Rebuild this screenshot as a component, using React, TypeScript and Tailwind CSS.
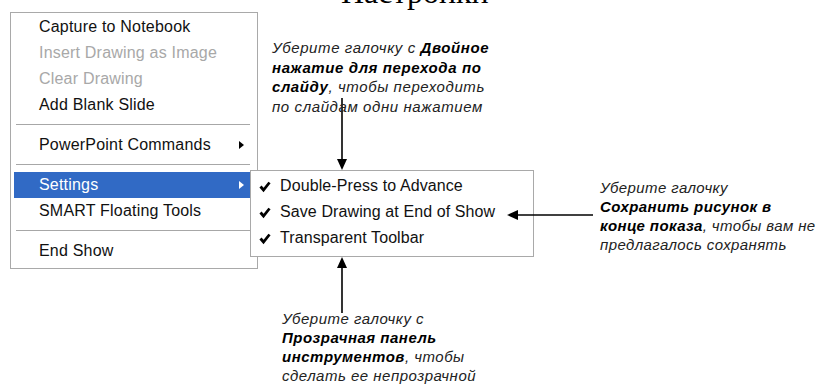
import { ReactNode } from 'react';

const ui = { fontFamily: '"Liberation Sans", Arial, sans-serif' };
const note = { fontFamily: '"Liberation Sans", Arial, sans-serif' };

function Row({ children, dim, active, sub }: { children: ReactNode; dim?: boolean; active?: boolean; sub?: boolean }) {
  return (
    <div
      className={`relative flex h-[26px] items-center pl-[25px] pr-[8px] text-[16px] tracking-[0.2px] ${
        active ? 'bg-[#316ac5] text-white' : dim ? 'text-[#a8a8a8]' : 'text-[#111]'
      }`}
    >
      <span>{children}</span>
      {sub && (
        <span
          className={`absolute right-[6px] top-[9px] h-0 w-0 border-y-[4px] border-l-[5px] border-y-transparent ${
            active ? 'border-l-white' : 'border-l-black'
          }`}
        />
      )}
    </div>
  );
}

function Sep() {
  return (
    <div className="flex h-[14px] items-center pl-[2px]">
      <div className="h-[2px] w-full border-t border-[#a7a7a7] bg-white" />
    </div>
  );
}

function Check({ children }: { children: ReactNode }) {
  return (
    <div className="flex h-[26px] items-center text-[16px] tracking-[0.1px] text-[#111]">
      <svg width="28" height="26" viewBox="0 0 28 26" className="shrink-0">
        <path d="M8.5 13.5 L11.5 17 L17.5 9.5" fill="none" stroke="#000" strokeWidth="2.8" />
      </svg>
      <span>{children}</span>
    </div>
  );
}

function Arrow({ x1, y1, x2, y2 }: { x1: number; y1: number; x2: number; y2: number }) {
  const ang = Math.atan2(y2 - y1, x2 - x1);
  const len = 11;
  const w = 5;
  const bx = x2 - len * Math.cos(ang);
  const by = y2 - len * Math.sin(ang);
  const px = -Math.sin(ang) * w;
  const py = Math.cos(ang) * w;
  return (
    <g>
      <line x1={x1} y1={y1} x2={bx} y2={by} stroke="#000" strokeWidth="1.6" />
      <polygon points={`${x2},${y2} ${bx + px},${by + py} ${bx - px},${by - py}`} fill="#000" />
    </g>
  );
}

export default function App() {
  return (
    <div className="relative h-[385px] w-[827px] overflow-hidden bg-white pl-[10px] pt-[12px]">
      <div
        className="absolute left-[341px] top-[-24px] text-[32px] leading-none text-black"
        style={{ fontFamily: '"Liberation Serif", "Times New Roman", serif' }}
      >
        Настройки
      </div>

      {/* main context menu */}
      <div className="w-[248px] border border-[#a9a9a9] bg-white pb-[4px] pl-[3px] pr-[7px] pt-[1px]" style={ui}>
        <Row>Capture to Notebook</Row>
        <Row dim>Insert Drawing as Image</Row>
        <Row dim>Clear Drawing</Row>
        <Row>Add Blank Slide</Row>
        <Sep />
        <Row sub>PowerPoint Commands</Row>
        <Sep />
        <Row sub active>Settings</Row>
        <Row>SMART Floating Tools</Row>
        <Sep />
        <Row>End Show</Row>
      </div>

      {/* settings submenu */}
      <div className="absolute left-[250px] top-[170px] h-[87px] w-[284px] border border-[#a9a9a9] bg-white pl-[1px] pt-[2px]" style={ui}>
        <Check>Double-Press to Advance</Check>
        <Check>Save Drawing at End of Show</Check>
        <Check>Transparent Toolbar</Check>
      </div>

      <svg className="pointer-events-none absolute left-0 top-0" width="827" height="385">
        <Arrow x1={342} y1={98} x2={342} y2={170} />
        <Arrow x1={593} y1={215} x2={507} y2={215} />
        <Arrow x1={342} y1={313} x2={342} y2={257} />
      </svg>

      <div className="absolute left-[272px] top-[38px] whitespace-nowrap text-[15px] italic leading-[19.5px] tracking-[0.6px] text-[#222]" style={note}>
        Уберите галочку с <b className="font-extrabold text-black">Двойное</b>
        <br />
        <b className="font-extrabold text-black">нажатие для перехода по</b>
        <br />
        <b className="font-extrabold text-black">слайду</b>, чтобы переходить
        <br />
        по слайдам одни нажатием
      </div>

      <div className="absolute left-[600px] top-[178px] whitespace-nowrap text-[15px] italic leading-[19px] tracking-[0.4px] text-[#222]" style={note}>
        Уберите галочку
        <br />
        <b className="font-extrabold text-black">Сохранить рисунок в</b>
        <br />
        <b className="font-extrabold text-black">конце показа</b>, чтобы вам не
        <br />
        предлагалось сохранять
      </div>

      <div className="absolute left-[282px] top-[309px] whitespace-nowrap text-[15px] italic leading-[19px] tracking-[0.5px] text-[#222]" style={note}>
        Уберите галочку с
        <br />
        <b className="font-extrabold text-black">Прозрачная панель</b>
        <br />
        <b className="font-extrabold text-black">инструментов</b>, чтобы
        <br />
        сделать ее непрозрачной
      </div>
    </div>
  );
}
